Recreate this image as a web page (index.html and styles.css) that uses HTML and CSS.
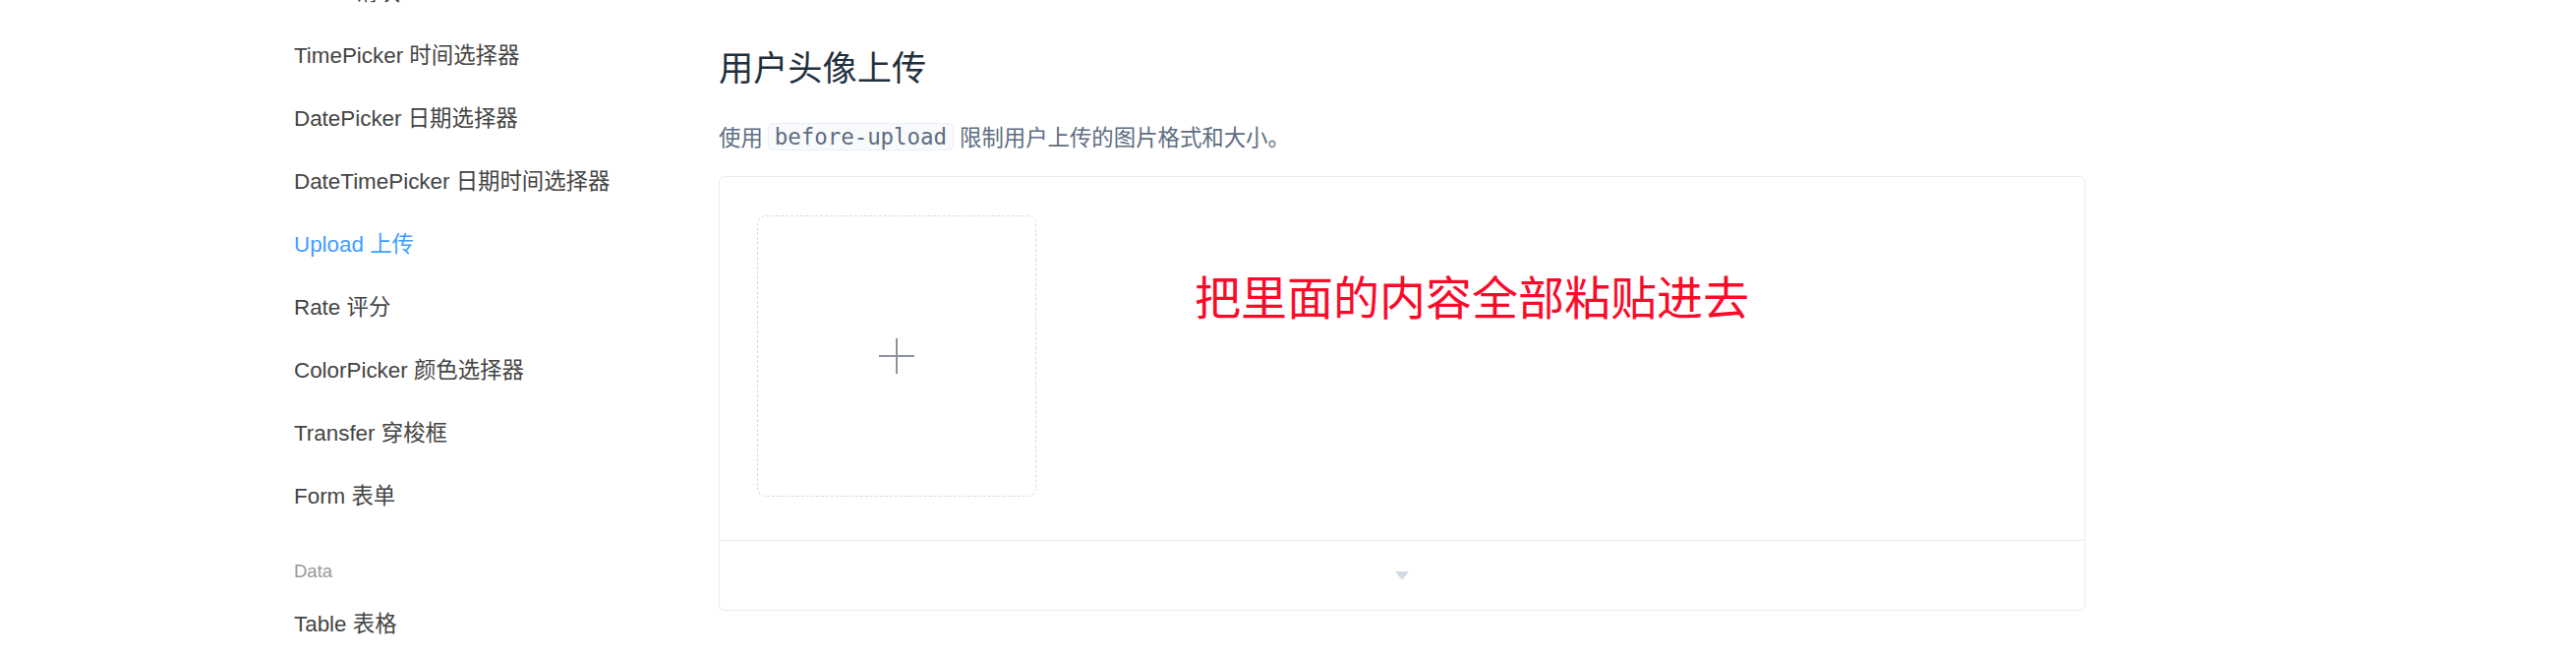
FILE: index.html
```html
<!DOCTYPE html>
<html lang="zh-CN">
<head>
<meta charset="utf-8">
<title>Upload 上传</title>
<link rel="stylesheet" href="styles.css">
</head>
<body>
<div class="page">
  <nav class="sidebar">
    <ul class="nav-list">
      <li class="nav-item">Slider 滑块</li>
      <li class="nav-item">TimePicker 时间选择器</li>
      <li class="nav-item">DatePicker 日期选择器</li>
      <li class="nav-item">DateTimePicker 日期时间选择器</li>
      <li class="nav-item active">Upload 上传</li>
      <li class="nav-item">Rate 评分</li>
      <li class="nav-item">ColorPicker 颜色选择器</li>
      <li class="nav-item">Transfer 穿梭框</li>
      <li class="nav-item">Form 表单</li>
      <li class="nav-group">Data</li>
      <li class="nav-item">Table 表格</li>
    </ul>
  </nav>
  <main class="content">
    <h3 class="title">用户头像上传</h3>
    <p class="desc">使用<code class="code">before-upload</code>限制用户上传的图片格式和大小。</p>
    <div class="demo-block">
      <div class="source">
        <div class="uploader">
          <svg class="plus" width="36" height="36" viewBox="0 0 36 36" aria-hidden="true">
            <line x1="18" y1="0" x2="18" y2="36" stroke="#8c939d" stroke-width="2"/>
            <line x1="0" y1="18" x2="36" y2="18" stroke="#8c939d" stroke-width="2"/>
          </svg>
        </div>
      </div>
      <div class="control">
        <span class="caret"></span>
      </div>
    </div>
  </main>
  <div class="annotation">把里面的内容全部粘贴进去</div>
</div>
</body>
</html>
```

FILE: styles.css
```css
html, body {
  margin: 0;
  padding: 0;
  background: #ffffff;
}

body {
  width: 2620px;
  height: 668px;
  overflow: hidden;
}

.page {
  position: relative;
  display: grid;
  grid-template-columns: 731px 1390px;
  align-items: start;
}

.sidebar {
  padding-left: 299px;
  font-family: "Liberation Sans", "Noto Sans CJK SC", sans-serif;
}

.nav-list {
  list-style: none;
  margin: -39px 0 0 0;
  padding: 0;
}

.nav-item {
  height: 64px;
  line-height: 64px;
  font-size: 22.4px;
  color: #444444;
  white-space: nowrap;
}

.nav-item.active {
  color: #409eff;
}

.nav-group {
  margin-top: 22px;
  height: 44px;
  line-height: 44px;
  font-size: 18.5px;
  color: #999999;
}

.content {
  padding-top: 45px;
  font-family: "Noto Sans CJK SC", "Noto Sans", sans-serif;
}

.title {
  margin: 0;
  font-size: 35.2px;
  line-height: 44px;
  font-weight: 400;
  color: #1f2f3d;
}

.desc {
  margin: 30px 0 0 0;
  font-size: 22.4px;
  line-height: 38px;
  color: #5e6d82;
  white-space: nowrap;
}

.code {
  display: inline-block;
  margin: 0 6px 0 5px;
  padding: 0 6px;
  font-family: "DejaVu Sans Mono", "Liberation Mono", monospace;
  font-size: 22.4px;
  line-height: 26px;
  color: #5e6d82;
  background: #f9fafc;
  border: 1px solid #eaeefb;
  border-radius: 6px;
  vertical-align: 1px;
}

.demo-block {
  margin-top: 22px;
  border: 1px solid #ebebeb;
  border-radius: 6px;
}

.source {
  padding: 39px 38px 44px 38px;
}

.uploader {
  width: 282px;
  height: 284px;
  border: 1px dashed #d9d9d9;
  border-radius: 9px;
  display: flex;
  align-items: center;
  justify-content: center;
}

.control {
  height: 70px;
  border-top: 1px solid #eaeefb;
  display: flex;
  align-items: center;
  justify-content: center;
}

.caret {
  width: 0;
  height: 0;
  border-left: 7px solid transparent;
  border-right: 7px solid transparent;
  border-top: 9px solid #d3dce6;
}

.annotation {
  position: absolute;
  left: 1215px;
  top: 268px;
  font-family: "Noto Sans CJK SC", sans-serif;
  font-size: 47px;
  line-height: 64px;
  color: #fb0a2a;
  white-space: nowrap;
}
```
